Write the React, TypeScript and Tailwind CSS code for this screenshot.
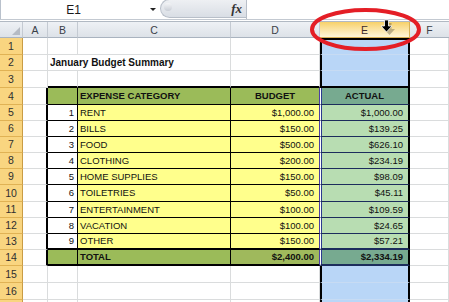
import React from "react";

const DATA: [number, string, string, string][] = [
  [1, "RENT", "$1,000.00", "$1,000.00"],
  [2, "BILLS", "$150.00", "$139.25"],
  [3, "FOOD", "$500.00", "$626.10"],
  [4, "CLOTHING", "$200.00", "$234.19"],
  [5, "HOME SUPPLIES", "$150.00", "$98.09"],
  [6, "TOILETRIES", "$50.00", "$45.11"],
  [7, "ENTERTAINMENT", "$100.00", "$109.59"],
  [8, "VACATION", "$100.00", "$24.65"],
  [9, "OTHER", "$150.00", "$57.21"],
];

const ROWS = Array.from({ length: 17 }, (_, i) => i + 1);

function SheetRow({ r }: { r: number }) {
  const isTable = r >= 4 && r <= 14;
  const isHead = r === 4;
  const isTotal = r === 14;
  const d = r >= 5 && r <= 13 ? DATA[r - 5] : null;
  const thickBottom = r === 13 || r === 14;

  const rowHeader = (
    <div className="flex items-center justify-center border-b border-r border-b-[#e0b254] border-r-[#c99c45] bg-[#f9d580] text-[10.5px] text-[#2f2f2f]">
      {r <= 16 ? r : ""}
    </div>
  );

  const a = (
    <div
      className={
        isTable
          ? "border-b border-b-[#dadcdd] border-r-2 border-r-black"
          : "border-b border-r border-b-[#dadcdd] border-r-[#dadcdd]"
      }
    />
  );

  let b: React.ReactNode;
  if (!isTable) {
    if (r === 2) {
      b = (
        <div className="relative z-10 flex items-center whitespace-nowrap border-b border-b-[#dadcdd] pl-[2px] text-[10px] font-bold text-[#111]">
          January Budget Summary
        </div>
      );
    } else if (r === 3) {
      b = <div className="border-b-2 border-r border-b-black border-r-[#dadcdd]" />;
    } else {
      b = <div className="border-b border-r border-b-[#dadcdd] border-r-[#dadcdd]" />;
    }
  } else {
    b = (
      <div
        className={
          "flex items-center justify-end border-r border-r-black pr-[3px] text-[#111] " +
          (thickBottom ? "border-b-2 border-b-black " : "border-b border-b-black ") +
          (isHead || isTotal ? "bg-[#9bbb59]" : "bg-white")
        }
      >
        {d ? d[0] : ""}
      </div>
    );
  }

  let c: React.ReactNode;
  if (!isTable) {
    c = (
      <div
        className={
          r === 3
            ? "border-b-2 border-r border-b-black border-r-[#dadcdd]"
            : "border-b border-r border-b-[#dadcdd] border-r-[#dadcdd]"
        }
      />
    );
  } else {
    c = (
      <div
        className={
          "flex items-center whitespace-nowrap border-r border-r-black pl-[2px] text-[#111] " +
          (thickBottom ? "border-b-2 border-b-black " : "border-b border-b-black ") +
          (isHead || isTotal ? "bg-[#9bbb59] font-bold" : "bg-[#ffff8c]")
        }
      >
        {isHead ? "EXPENSE CATEGORY" : isTotal ? "TOTAL" : d ? d[1] : ""}
      </div>
    );
  }

  let dd: React.ReactNode;
  if (!isTable) {
    dd = (
      <div
        className={
          r === 3
            ? "border-b-2 border-r border-b-black border-r-[#dadcdd]"
            : "border-b border-r border-b-[#dadcdd] border-r-[#dadcdd]"
        }
      />
    );
  } else {
    dd = (
      <div
        className={
          "flex items-center border-r border-r-[#4d3fa3] text-[#111] " +
          (thickBottom ? "border-b-2 border-b-black " : "border-b border-b-black ") +
          (isHead
            ? "justify-center bg-[#9bbb59] font-bold"
            : isTotal
            ? "justify-end bg-[#9fb95c] pr-[5px] font-bold"
            : "justify-end bg-[#ffff8c] pr-[5px]")
        }
      >
        {isHead ? "BUDGET" : isTotal ? "$2,400.00" : d ? d[2] : ""}
      </div>
    );
  }

  let e: React.ReactNode;
  if (!isTable) {
    e = (
      <div
        className={
          "border-l-2 border-r-2 border-l-black border-r-black bg-[#b9d6f7] " +
          (r === 1 ? "border-t-2 border-t-black " : "") +
          (r === 3 ? "border-b-2 border-b-black" : "border-b border-b-[#c7dbf3]")
        }
      />
    );
  } else {
    e = (
      <div
        className={
          "flex items-center border-l border-r-2 border-l-white border-r-black text-[#111] shadow-[inset_1px_0_0_#2b3a8f] " +
          (thickBottom ? "border-b-2 border-b-[#1c2d5c] " : "border-b border-b-[#1c2d5c] ") +
          (isHead
            ? "justify-center bg-[#77aa90] font-bold"
            : isTotal
            ? "justify-end bg-[#77aa90] pr-[5px] font-bold"
            : "justify-end bg-[#b8ddb2] pr-[5px]")
        }
      >
        {isHead ? "ACTUAL" : isTotal ? "$2,334.19" : d ? d[3] : ""}
      </div>
    );
  }

  const f = <div className="border-b border-r border-b-[#dadcdd] border-r-[#dadcdd]" />;

  return (
    <>
      {rowHeader}
      {a}
      {b}
      {c}
      {dd}
      {e}
      {f}
    </>
  );
}

function ColHeader({ label, selected, last }: { label: string; selected?: boolean; last?: boolean }) {
  return (
    <div
      className={
        "flex items-center justify-center border-b pt-[1px] text-[10.5px] " +
        (last ? "" : "border-r ") +
        (selected
          ? "border-b-[#d8b256] border-r-[#d8b256] bg-linear-to-b from-[#f7d168] to-[#fff6d8] text-[#3a2a2a]"
          : "border-b-[#a9b3bf] border-r-[#c4cad2] bg-linear-to-b from-[#eef1f5] to-[#dde2e8] text-[#3a3f48]")
      }
    >
      {label}
    </div>
  );
}

export default function App() {
  return (
    <div className="relative h-[302px] w-[449px] overflow-hidden bg-white font-['Liberation_Sans',Arial,sans-serif] text-[9.5px] leading-none">
      {/* formula bar */}
      <div className="flex h-[19px] border-l border-l-[#b9c1cc]">
        <div className="flex w-[145px] items-center justify-center text-[12px] text-[#1a1a1a]">E1</div>
        <div className="flex w-[14px] items-center justify-center">
          <div className="h-0 w-0 border-x-[3px] border-t-[3px] border-x-transparent border-t-[#222]" />
        </div>
        <div className="relative -mt-[1px] flex h-[19px] w-[86px] items-start rounded-l-full border border-r-0 border-[#b8bfc9] bg-linear-to-b from-[#eef0f3] to-[#d9dee5]">
          <div className="ml-[3px] mt-[3px] h-[8px] w-[8px] rounded-full bg-linear-to-b from-[#f4f5f7] to-[#c9ced6]" />
          <div className="ml-auto mr-[4px] mt-[2px] font-['Liberation_Serif',serif] text-[13px] font-bold italic text-[#333]">
            fx
          </div>
        </div>
        <div className="flex-1 border-l border-l-[#b8bfc9] bg-white" />
      </div>
      <div className="h-[1px] bg-[#c3c9d1]" />
      <div className="h-[1px] bg-white" />
      <div className="h-[1px] bg-[#b1b9c3]" />

      {/* sheet */}
      <div className="grid grid-cols-[23px_25px_30px_153px_89px_90px_1fr] grid-rows-[16px_17px_16px_17px_17px_16px_16px_16px_16px_16px_17px_16px_16px_16px_16px_17px_17px_17px]">
        <div className="relative border-b border-r border-b-[#a9b3bf] border-r-[#c4cad2] bg-linear-to-b from-[#eef1f5] to-[#dde2e8]">
          <div className="absolute bottom-[2px] right-[2px] h-0 w-0 border-b-[8px] border-l-[8px] border-b-[#b5bbc4] border-l-transparent" />
        </div>
        <ColHeader label="A" />
        <ColHeader label="B" />
        <ColHeader label="C" />
        <ColHeader label="D" />
        <ColHeader label="E" selected />
        <ColHeader label="F" last />
        {ROWS.map((r) => (
          <SheetRow key={r} r={r} />
        ))}
      </div>

      {/* annotation overlay */}
      <svg className="pointer-events-none absolute left-0 top-0" width="449" height="302">
        <ellipse cx="365.5" cy="29.5" rx="53.5" ry="19.5" fill="none" stroke="#e41e26" strokeWidth="4" />
        <polygon points="387.5,23 391.5,23 391.5,29 395,29 389.5,35 384,29 387.5,29" fill="#000" opacity="0.25" />
        <polygon
          points="384.5,20 388.5,20 388.5,26 392,26 386.5,32 381,26 384.5,26"
          fill="#000"
          stroke="#fff"
          strokeWidth="0.8"
        />
      </svg>
    </div>
  );
}
